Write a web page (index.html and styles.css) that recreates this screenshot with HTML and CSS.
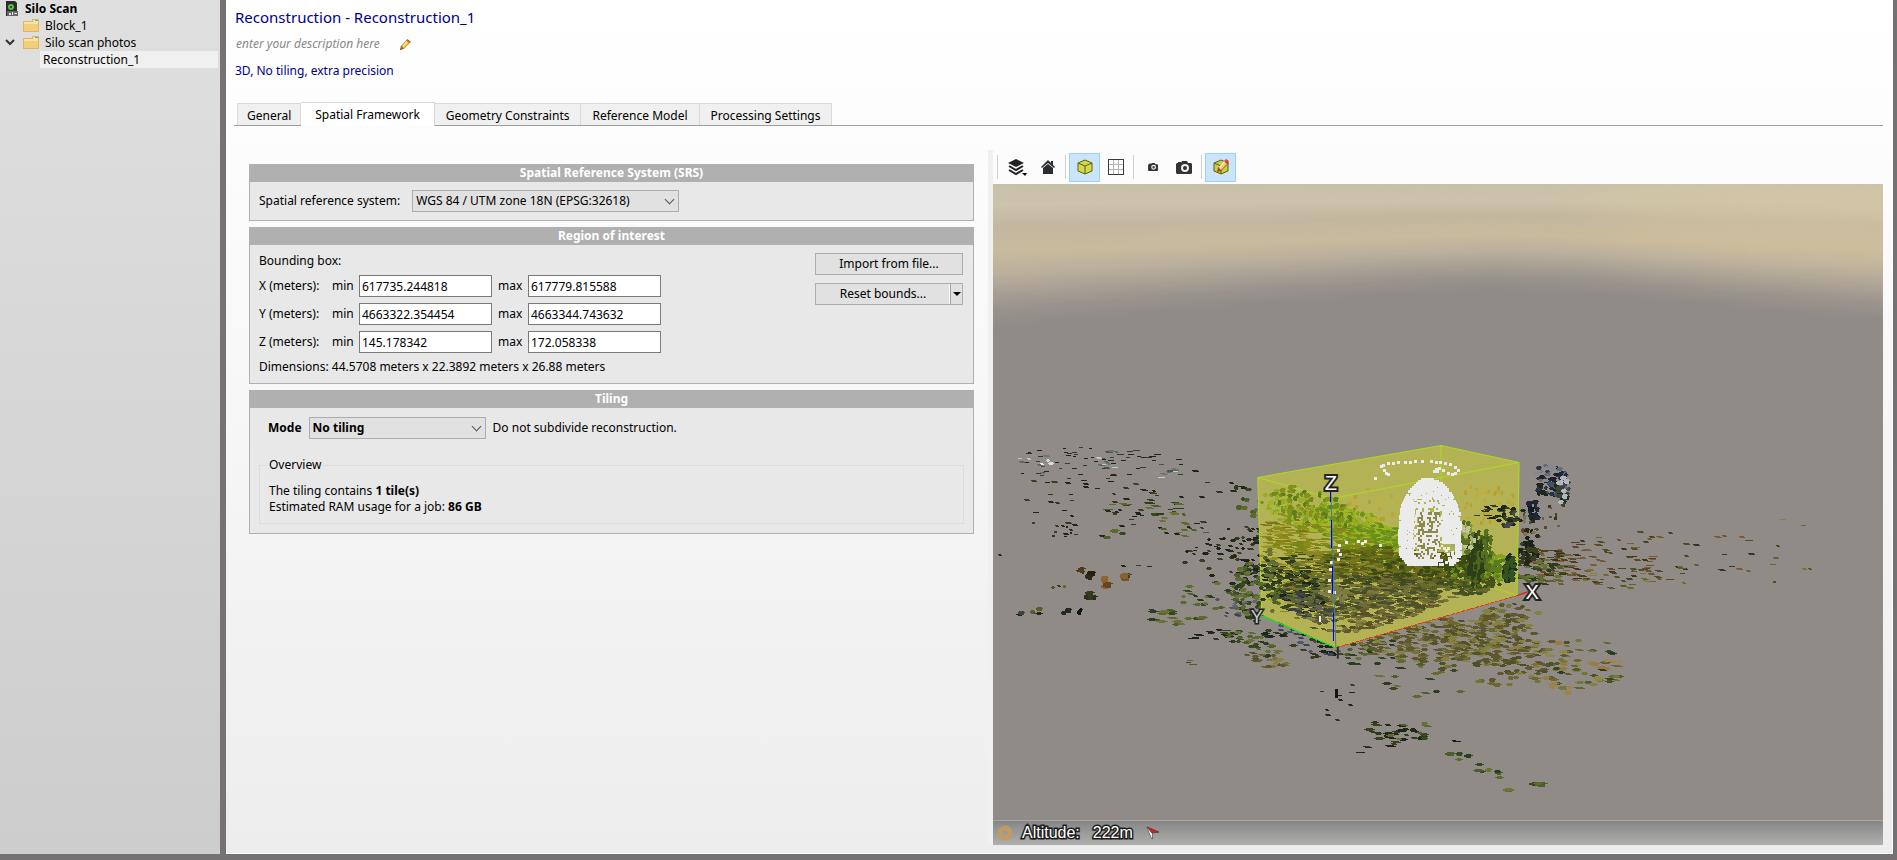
FILE: index.html
```html
<!DOCTYPE html>
<html lang="en">
<head>
<meta charset="UTF-8">
<title>Silo Scan - Reconstruction_1</title>
<link rel="stylesheet" href="styles.css">
<script src="scene.js" defer></script>
</head>
<body>

<nav class="sidebar">
	<ul class="tree">
		<li class="project">
			<svg width="14" height="16" viewBox="0 0 14 16"><path fill="#2b2b2b" d="M1 0h9l2 2v13H1z"/><path fill="#666" d="M2 10h11v5H2z"/><path fill="#ddd" d="M4 12h2v2H4zM7 11h1v3H7zM9 12h3v1H9z"/><circle cx="6" cy="6" r="2" fill="none" stroke="#5bc043" stroke-width="2"/></svg>
			<a href="#project">Silo Scan</a>
		</li>
		<li class="block">
			<svg class="folder" width="16" height="13" viewBox="0 0 16 13"><path fill="#e0b45c" d="M0 2h9V0h7v13H0z"/><path fill="#fbe3a0" d="M1 3h9V1h5v11H1z"/><path fill="#f2ce7c" d="M1 5h14v7H1z"/><path fill="#45b4e0" d="M12 1h3v1h-3z"/></svg>
			<a href="#block">Block_1</a>
		</li>
		<li class="block open">
			<svg class="chevron" width="10" height="7" viewBox="0 0 10 7"><path fill="none" stroke="#333" stroke-width="2" d="M1 1l4 4 4-4"/></svg>
			<svg class="folder" width="16" height="13" viewBox="0 0 16 13"><path fill="#e0b45c" d="M0 2h9V0h7v13H0z"/><path fill="#fbe3a0" d="M1 3h9V1h5v11H1z"/><path fill="#f2ce7c" d="M1 5h14v7H1z"/><path fill="#45b4e0" d="M12 1h3v1h-3z"/></svg>
			<a href="#photos">Silo scan photos</a>
		</li>
		<li class="recon"><a href="#recon">Reconstruction_1</a></li>
	</ul>
</nav>

<main class="main">
	<header class="heading">
		<h1>Reconstruction - Reconstruction_1</h1>
		<p class="description">
			enter your description here
			<svg width="11" height="11" viewBox="0 0 12 12"><path fill="#94701f" d="M0 12l1-4 7-8 4 3-8 8z"/><path fill="#f8cf45" d="M2 8l5-6 3 2-6 6z"/><path fill="#fbe9a0" d="M3 7l4-5 1 1-4 5z"/><path fill="#e0604a" d="M8 1l3 2-1 1-3-2z"/><path fill="#333" d="M0 12l1-2 1 1z"/></svg>
		</p>
		<p class="summary">3D, No tiling, extra precision</p>
	</header>

	<div class="tabs" role="tablist">
		<button type="button" role="tab">General</button>
		<button type="button" role="tab" class="active" aria-selected="true">Spatial Framework</button>
		<button type="button" role="tab">Geometry Constraints</button>
		<button type="button" role="tab">Reference Model</button>
		<button type="button" role="tab">Processing Settings</button>
	</div>

	<div class="content">
		<form class="settings">
			<section class="panel">
				<h2>Spatial Reference System (SRS)</h2>
				<div class="panel-body srs">
					<label for="srs">Spatial reference system:</label>
					<span class="dropdown wide">
						<select id="srs"><option>WGS 84 / UTM zone 18N (EPSG:32618)</option></select>
					</span>
				</div>
			</section>

			<section class="panel">
				<h2>Region of interest</h2>
				<div class="panel-body region">
					<div class="bounds">
						<p>Bounding box:</p>
						<div class="bound">
							<span class="axis">X (meters):</span>
							<label for="xmin">min</label><input type="text" id="xmin" value="617735.244818">
							<label for="xmax">max</label><input type="text" id="xmax" value="617779.815588">
						</div>
						<div class="bound">
							<span class="axis">Y (meters):</span>
							<label for="ymin">min</label><input type="text" id="ymin" value="4663322.354454">
							<label for="ymax">max</label><input type="text" id="ymax" value="4663344.743632">
						</div>
						<div class="bound">
							<span class="axis">Z (meters):</span>
							<label for="zmin">min</label><input type="text" id="zmin" value="145.178342">
							<label for="zmax">max</label><input type="text" id="zmax" value="172.058338">
						</div>
						<p>Dimensions: 44.5708 meters x 22.3892 meters x 26.88 meters</p>
					</div>
					<div class="actions">
						<button type="button" class="btn">Import from file...</button>
						<div class="split">
							<button type="button" class="btn">Reset bounds...</button>
							<button type="button" class="btn more" aria-label="More reset options"><svg width="8" height="4" viewBox="0 0 8 4"><path d="M0 0h8L4 4z"/></svg></button>
						</div>
					</div>
				</div>
			</section>

			<section class="panel">
				<h2>Tiling</h2>
				<div class="panel-body tiling">
					<div class="mode">
						<label for="mode">Mode</label>
						<span class="dropdown">
							<select id="mode"><option>No tiling</option></select>
						</span>
						<span>Do not subdivide reconstruction.</span>
					</div>
					<fieldset>
						<legend>Overview</legend>
						<p>The tiling contains <b>1 tile(s)</b></p>
						<p>Estimated RAM usage for a job: <b>86 GB</b></p>
					</fieldset>
				</div>
			</section>
		</form>

		<section class="viewer">
			<div class="toolbar">
				<span class="sep"></span>
				<button type="button" class="tool" aria-label="Layers">
					<svg width="20" height="18" viewBox="0 0 20 18"><path fill="#222" d="M9 1l8 4-8 4-8-4z"/><path fill="none" stroke="#222" stroke-width="2" d="M2 8l7 4 7-4M2 12l7 4 7-4"/><path d="M15 15h5l-2 3z"/></svg>
				</button>
				<button type="button" class="tool" aria-label="Home">
					<svg width="14" height="14" viewBox="0 0 14 14"><path fill="#2a2d30" d="M2 8l5-4 5 4v6H2zM0 7l7-7 3 3V1h2v4l2 2-1 1-6-5-6 5z"/></svg>
				</button>
				<span class="sep"></span>
				<button type="button" class="tool on" aria-label="Bounding box">
					<svg width="16" height="16" viewBox="0 0 16 16"><path fill="#d5d84a" stroke="#5c5f14" d="M8 1l7 3v8l-7 3-7-3V4z"/><path fill="none" stroke="#5c5f14" d="M1 4l7 3 7-3M8 7v8"/></svg>
				</button>
				<button type="button" class="tool" aria-label="Grid">
					<svg width="16" height="16" viewBox="0 0 16 16" shape-rendering="crispEdges"><path fill="#fff" stroke="#3a3a3a" d="M.5.5h15v15H.5z"/><path fill="none" stroke="#b5b5b5" d="M5.500 1v14M10.500 1v14M1 5.500h14M1 10.500h14"/></svg>
				</button>
				<span class="sep"></span>
				<button type="button" class="tool" aria-label="Smaller cameras">
					<svg width="10" height="8" viewBox="0 0 16 13"><path fill="#333" d="M1 2h1V1h3v1l1-2h5l1 2h3l1 1v9l-1 1H1l-1-1V3z"/><circle cx="9" cy="7" r="3" fill="#444" stroke="#eee" stroke-width="2"/></svg>
				</button>
				<button type="button" class="tool" aria-label="Larger cameras">
					<svg width="16" height="13" viewBox="0 0 16 13"><path fill="#333" d="M1 2h1V1h3v1l1-2h5l1 2h3l1 1v9l-1 1H1l-1-1V3z"/><circle cx="9" cy="7" r="3" fill="#333" stroke="#eee" stroke-width="2"/></svg>
				</button>
				<span class="sep"></span>
				<button type="button" class="tool on" aria-label="Edit region">
					<svg width="16" height="16" viewBox="0 0 16 16"><path fill="#c9cc45" stroke="#5c5f14" d="M8 1l7 3v8l-7 3-7-3V4z"/><path fill="none" stroke="#5c5f14" d="M1 4l7 3 7-3M8 7v8"/><path fill="#a3492a" d="M4 13l1-4 7-8 4 3-8 8z"/><path fill="#fbd04c" d="M6 9l6-6 2 2-6 6z"/><path fill="#fff" d="M6 8l5-6 1 1-5 6z"/><path fill="#e8402e" d="M12 1l1-1 3 2-1 2z"/></svg>
				</button>
			</div>
			<div class="view">
				<svg class="scene" viewBox="0 0 890 660" preserveAspectRatio="xMidYMin slice">
					<g id="sky"></g>
					<g id="outside" shape-rendering="crispEdges"></g>
					<path fill="#b3b355" d="M265 293L448 261L526 278L524 411L343 463L269 430z"/>
					<g fill="none" stroke="#aadc1e">
						<path d="M265 293L448 261L526 278L339 314zM265 293L269 430M526 278L524 411M448 261v36M481 397l43 14M386 401l22-4"/>
					</g>
					<g id="inside" shape-rendering="crispEdges"></g>
					<g id="silo" shape-rendering="crispEdges" fill="#ebebeb"></g>
					<g fill="none">
						<path stroke="#4a8088" d="M338 306L343 463"/>
						<path stroke="#0000f0" stroke-width="1" shape-rendering="crispEdges" d="M338 306v12M339 335v28M340 381v28M341 428v28"/>
						<path stroke="#00f000" stroke-width="1" shape-rendering="crispEdges" d="M264 429L343 463"/>
						<path stroke="#f03a00" stroke-width="1" stroke-dasharray="4 1" shape-rendering="crispEdges" d="M343 463L524 411"/>
						<path stroke="#f00000" stroke-width="1" d="M524 411L535 407"/>
						<path stroke="#33302a" stroke-width="2" d="M345 462v12"/>
					</g>
					<g class="axis-name">
						<text x="338" y="306">Z</text>
						<text x="539" y="414">X</text>
						<text class="faint" x="264" y="438">Y</text>
					</g>
				</svg>
				<div class="status">
					<svg width="16" height="16" viewBox="0 0 16 16"><circle cx="8" cy="8" r="5" fill="none" stroke="#c29a63" stroke-width="5"/></svg>
					<span class="altitude">Altitude:</span>
					<span>222m</span>
					<svg class="compass" width="14" height="14" viewBox="0 0 14 14"><path fill="#eee" stroke="#444" d="M1 1l5 5v7z"/><path fill="#c8201c" stroke="#444" d="M1 1l12 5-7 1z"/></svg>
				</div>
			</div>
		</section>
	</div>
</main>

</body>
</html>
```
FILE: styles.css
```css
* {
	box-sizing: border-box;
}
html, body {
	margin: 0;
	padding: 0;
}
body {
	display: flex;
	min-height: 100vh;
	padding: 0 4px 6px 0;
	background: #767173;
	color: #000;
	font-family: "Noto Sans", Tahoma, "DejaVu Sans", sans-serif;
	font-size: 12px;
	line-height: 16px;
}
h1, h2, p, ul, fieldset {
	margin: 0;
	padding: 0;
}
button, input, select {
	font: inherit;
	color: inherit;
}

/* project tree */
.sidebar {
	flex: 0 0 220px;
	margin-right: 6px;
	background: linear-gradient(#dfdfdf, #cdcdcd);
}
.tree {
	list-style: none;
	padding: 0 2px 0 0;
}
.tree li {
	display: flex;
	align-items: center;
	gap: 6px;
	height: 17px;
}
.tree a {
	color: inherit;
	text-decoration: none;
}
.tree .project {
	padding-left: 5px;
	font-weight: bold;
}
.tree .block {
	padding-left: 23px;
}
.tree .open {
	padding-left: 5px;
	gap: 8px;
}
.tree .open a {
	margin-left: -2px;
}
.tree .recon {
	margin-left: 40px;
	padding-left: 3px;
	background: #f0f0f0;
}

/* right hand page */
.main {
	flex: 1;
	display: flex;
	flex-direction: column;
	min-width: 0;
	padding: 7px 9px 8px 8px;
	border: solid #fff;
	border-width: 0 1px 1px 0;
	background: linear-gradient(#fff, #fcfcfc 20%, #ededed);
}
.heading {
	height: 95px;
	padding-left: 1px;
	color: #00008b;
}
h1 {
	font-size: 15px;
	font-weight: normal;
	line-height: 20px;
}
.description {
	display: flex;
	align-items: center;
	gap: 20px;
	margin: 9px 0 11px 1px;
	color: #888;
	font-style: italic;
}
.tabs {
	display: flex;
	align-items: flex-end;
	height: 24px;
	padding-left: 3px;
	border-bottom: 1px solid #a0a0a0;
}
.tabs button {
	height: 22px;
	padding: 2px 11px 0;
	border: 1px solid #d9d9d9;
	border-width: 1px 1px 0 0;
	background: #f0f0f0;
}
.tabs button:first-child {
	padding: 2px 9px 0;
	border-left-width: 1px;
}
.tabs button.active {
	height: 24px;
	margin-bottom: -1px;
	padding: 0 14px;
	background: #fff;
}
.content {
	flex: 1;
	display: grid;
	grid-template-columns: 754fr 895fr;
	padding-top: 24px;
}

/* settings form */
.settings {
	display: flex;
	flex-direction: column;
	gap: 6px;
	padding: 14px 14px 0 15px;
}
.panel {
	border: 1px solid #b0b0b0;
	background: #e8e8e8;
}
h2 {
	height: 17px;
	background: #b0b0b0;
	color: #fff;
	font-size: 12px;
	line-height: 16px;
	text-align: center;
}
.panel-body {
	padding: 8px 10px 8px 9px;
}
.srs, .mode {
	display: flex;
	align-items: center;
	gap: 7px;
}
.srs {
	gap: 12px;
}
.dropdown {
	position: relative;
	width: 177px;
}
.dropdown.wide {
	width: 267px;
}
.dropdown::after {
	content: "";
	position: absolute;
	right: 6px;
	top: 6px;
	width: 6px;
	height: 6px;
	border: solid #555;
	border-width: 0 1px 1px 0;
	transform: rotate(45deg);
	pointer-events: none;
}
select {
	display: block;
	appearance: none;
	width: 100%;
	height: 22px;
	padding: 0 3px;
	border: 1px solid #adadad;
	border-radius: 0;
	background: #e1e1e1;
}
.region {
	display: flex;
	justify-content: space-between;
}
.bounds {
	display: flex;
	flex-direction: column;
	gap: 6px;
}
.bound {
	display: flex;
	align-items: center;
	gap: 6px;
}
.axis {
	width: 67px;
}
.bound label {
	width: 21px;
}
.bound label:nth-of-type(2) {
	width: 24px;
}
.bound input {
	width: 133px;
	height: 22px;
	padding: 0 2px;
	border: 1px solid #7a7a7a;
	background: #fff;
}
.actions {
	display: flex;
	flex-direction: column;
	gap: 8px;
	width: 148px;
}
.btn {
	height: 22px;
	padding: 0;
	border: 1px solid #adadad;
	background: #e1e1e1;
}
.split {
	display: flex;
}
.split .btn {
	flex: 1;
	border-right: 0;
	box-shadow: inset -1px 0 #fff;
}
.split .more {
	flex: 0 0 13px;
	border-right: 1px solid #adadad;
	border-left: 1px solid #a0a0a0;
	box-shadow: none;
}
.more svg {
	display: block;
	margin: 0 auto;
}
.panel-body.tiling {
	padding: 9px;
}
.mode label, .mode select {
	font-weight: bold;
}
.mode label {
	padding-left: 9px;
}
fieldset {
	margin-top: 18px;
	padding: 10px 9px 8px;
	border: 1px solid #dcdcdc;
}
legend {
	padding: 0 2px;
	margin-left: -2px;
}

/* 3D view */
.viewer {
	display: flex;
	flex-direction: column;
	border-left: 5px solid #f0f0f0;
}
.toolbar {
	display: flex;
	align-items: center;
	height: 34px;
	padding: 0 2px;
	background: #fcfcfc;
}
.sep {
	width: 1px;
	height: 24px;
	margin: 0 3px 0 2px;
	background: #d0d0d0;
}
.tool {
	display: flex;
	align-items: center;
	justify-content: center;
	width: 31px;
	height: 29px;
	padding: 0;
	border: 1px solid transparent;
	background: none;
}
.tool.on {
	border-color: #99d1ff;
	background: #cce4f9;
}
.view {
	flex: 1;
	position: relative;
	min-height: 320px;
	overflow: hidden;
	background: #8f8a86;
}
.scene {
	position: absolute;
	width: 100%;
	height: 100%;
}
.axis-name {
	fill: #fff;
	stroke: #222;
	stroke-width: 4px;
	paint-order: stroke;
	font: 20px "Liberation Sans", Arial, sans-serif;
	text-anchor: middle;
}
.axis-name .faint {
	fill: #ccc;
	font-size: 18px;
	stroke-width: 3px;
}
.status {
	position: absolute;
	left: 0;
	right: 0;
	bottom: 0;
	display: flex;
	align-items: center;
	gap: 13px;
	height: 25px;
	padding: 0 4px;
	border-top: 1px solid #a8a4a1;
	background: linear-gradient(#868686, #afafae);
	color: #fff;
	font: 16px "Liberation Sans", Arial, sans-serif;
	-webkit-text-stroke: 3px #1c1c1c;
	paint-order: stroke;
}
.altitude {
	margin-left: -4px;
}
```
FILE: scene.js
```js
var SVG = 'http://www.w3.org/2000/svg';
var seed = 7;

function rnd() {
	seed = (seed * 16807) % 2147483647;
	return seed / 2147483647;
}

function add_path(parent, d, fill) {
	var p = document.createElementNS(SVG, 'path');
	p.setAttribute('d', d);
	if (fill) p.setAttribute('fill', fill);
	document.getElementById(parent).appendChild(p);
}

// sky: bands that bend towards the middle of the horizon
var sky_stops = [
	[0, 200, 192, 170], [20, 204, 195, 170], [42, 196, 183, 160], [68, 200, 186, 156],
	[88, 188, 176, 158], [108, 168, 160, 147], [124, 154, 147, 141], [146, 143, 138, 134]
];

function sky_colour(y) {
	var i = 0;
	while (i < sky_stops.length - 2 && sky_stops[i + 1][0] < y) i++;
	var a = sky_stops[i], b = sky_stops[i + 1];
	var t = Math.min(1, (y - a[0]) / (b[0] - a[0]));
	var c = [1, 2, 3].map(function (k) { return Math.round(a[k] + (b[k] - a[k]) * t); });
	return 'rgb(' + c.join(',') + ')';
}

function draw_sky() {
	for (var y = 0; y < 146; y += 2) {
		var mid = y * 0.74;
		add_path('sky', 'M0 ' + y + 'Q350 ' + (mid + y * 0.04) + ' 500 ' + mid +
			'Q620 ' + (mid + y * 0.02) + ' 890 ' + (y * 0.96) + 'V660H0z', sky_colour(y));
	}
	var glow = document.createElementNS(SVG, 'ellipse');
	glow.setAttribute('cx', 860);
	glow.setAttribute('cy', 20);
	glow.setAttribute('rx', 260);
	glow.setAttribute('ry', 55);
	glow.setAttribute('fill', '#e0cc9c');
	glow.setAttribute('style', 'opacity:.3;filter:blur(30px)');
	document.getElementById('sky').appendChild(glow);
}

var dark = ['#1e2415', '#25291a', '#2f3a1e', '#1c2420', '#39401f'];
var green = ['#36481f', '#4b5f2b', '#5c6b2c', '#2c3b22', '#6a7137'];
var grey = ['#5c6a68', '#8c9492', '#4b5050', '#c0c8c6', '#6c7478'];
var brown = ['#59482a', '#7d5c35', '#3c3318', '#6b5b35', '#4b431f'];
var olive = ['#6a6730', '#777238', '#5c5728', '#4e5026', '#868043', '#615533'];
var lime = ['#84a31b', '#8eae1b', '#9aac2a', '#73921c', '#a3b52a'];
var mustard = ['#989420', '#8a861c', '#a7a032', '#7b7718', '#94901c'];
var gold = ['#c2b034', '#b5a22e', '#bda73a'];
var night = ['#14202a', '#2a3142', '#1d2318', '#42506a', '#20281e'];

// x, y, half width, half height, slope, count, point width, point height, colours
var outside = [
	[80, 284, 68, 22, 0, 46, 5, 1, dark], [45, 280, 22, 10, 0, 10, 6, 2, grey],
	[54, 278, 7, 3, 0, 3, 6, 3, ['#d5dedb', '#eee']],
	[120, 277, 17, 12, 0, 14, 6, 2, grey], [172, 290, 13, 11, 0, 10, 7, 2, grey],
	[150, 277, 50, 12, 0, 12, 6, 1, dark],
	[110, 320, 85, 32, 0.15, 38, 6, 2, dark], [160, 325, 48, 10, 0, 14, 9, 2, green],
	[200, 300, 55, 25, 0, 14, 7, 2, dark], [100, 360, 95, 40, 0, 10, 5, 2, dark],
	[190, 338, 32, 12, 0.2, 18, 7, 2, green], [215, 355, 35, 25, 0, 18, 5, 2, dark],
	[120, 350, 12, 8, 0, 3, 10, 4, green], [70, 346, 12, 8, 0, 8, 4, 2, dark],
	[93, 388, 9, 7, 0, 6, 7, 6, ['#23230f', '#2e2819', '#33331a', '#4e3b20']],
	[98, 409, 3, 5, 0, 4, 9, 7, ['#2a2f18', '#363a20']],
	[113, 396, 2, 7, 0, 3, 8, 7, ['#8c6535', '#60471f']],
	[133, 388, 8, 2, 0, 4, 9, 7, ['#735426', '#4f3b1c', '#856236']],
	[70, 400, 10, 3, 0, 3, 4, 3, brown],
	[37, 425, 14, 7, 0, 6, 7, 4, ['#22271a', '#3e443b', '#5f5a29']],
	[83, 425, 14, 3, 0, 4, 6, 5, ['#11180f', '#25291b']],
	[180, 430, 32, 8, 0.1, 20, 10, 3, green], [225, 410, 40, 16, 0, 30, 8, 3, green],
	[230, 375, 40, 25, 0, 24, 6, 3, dark], [255, 315, 20, 14, 0.4, 14, 7, 5, green],
	[260, 370, 20, 32, 0, 65, 6, 3, dark], [260, 405, 22, 30, 0, 80, 7, 4, green],
	[250, 420, 30, 14, 0, 22, 5, 3, ['#555963', '#46423b', '#66636f']],
	[225, 450, 26, 8, -0.2, 14, 9, 2, dark], [262, 457, 27, 12, 0.3, 34, 8, 3, green],
	[273, 473, 22, 9, 0.1, 20, 8, 3, olive], [198, 477, 4, 2, 0, 3, 7, 2, green],
	[305, 453, 38, 14, 0.4, 34, 8, 3, dark], [320, 455, 34, 12, 0.4, 16, 7, 3, ['#50546a', '#3c4458']],
	[380, 463, 35, 18, 0, 46, 9, 3, green], [440, 453, 75, 22, -0.05, 200, 9, 3, olive],
	[500, 455, 50, 25, 0, 130, 9, 3, olive], [490, 470, 80, 28, 0.1, 75, 9, 4, olive],
	[560, 477, 70, 26, 0.15, 55, 10, 3, olive], [585, 478, 45, 26, 0, 18, 9, 4, ['#8e8a43', '#987c45', '#707a36']],
	[520, 430, 30, 15, 0, 42, 9, 4, olive], [600, 480, 45, 25, 0, 14, 10, 3, green],
	[622, 473, 9, 3, 0, 3, 9, 4, ['#a18650']],
	[565, 500, 14, 10, 0.5, 5, 9, 4, ['#9c8349']], [430, 493, 45, 24, 0, 14, 10, 3, green],
	[342, 508, 20, 26, 0, 9, 5, 2, dark], [342, 506, 2, 4, 0, 2, 3, 8, ['#15170f']],
	[402, 548, 32, 13, 0.1, 26, 10, 3, dark], [415, 546, 28, 12, 0, 10, 8, 3, green],
	[373, 564, 12, 3, -0.5, 3, 9, 1, dark], [468, 566, 12, 7, -0.3, 4, 10, 5, green],
	[495, 584, 16, 5, 0.3, 7, 10, 4, green], [513, 604, 3, 1, 0, 2, 10, 4, olive],
	[545, 597, 3, 1, 0, 3, 11, 5, green], [461, 556, 3, 1, 0, 2, 8, 2, ['#171d0e']],
	[550, 380, 42, 18, 0.1, 90, 9, 2, brown], [610, 378, 70, 22, 0.1, 52, 8, 2, brown],
	[545, 385, 28, 13, 0.1, 40, 9, 3, green], [700, 368, 110, 24, 0.05, 42, 7, 2, brown],
	[650, 390, 60, 16, 0, 22, 7, 2, olive], [790, 370, 30, 40, 0, 5, 5, 2, olive],
	[555, 289, 18, 9, 0, 34, 7, 4, ['#33363b', '#646878', '#1f2027', '#85888f']],
	[557, 303, 15, 7, 0, 34, 6, 5, night],
	[570, 302, 5, 18, 0, 42, 6, 5, ['#3d465d', '#616b83', '#1e2833', '#39462e', '#b3b6bd']],
	[541, 320, 6, 16, 0, 12, 6, 6, ['#111b2e', '#202838']],
	[537, 340, 9, 24, 0, 28, 5, 5, ['#172018', '#5e472f', '#242a1d', '#7c99a0', '#897046']],
	[533, 365, 11, 12, 0, 36, 6, 5, dark], [560, 330, 16, 14, 0, 9, 3, 3, brown]
];

var inside = [
	[305, 375, 36, 58, 0.1, 190, 10, 2, mustard], [305, 326, 37, 16, 0.3, 50, 5, 4, lime],
	[330, 330, 55, 20, 0.3, 130, 6, 5, lime], [362, 343, 43, 20, 0.3, 320, 7, 4, lime],
	[385, 355, 32, 18, 0.1, 170, 7, 3, ['#92b41a', '#7d9b18', '#689018']],
	[320, 320, 45, 18, 0.2, 60, 5, 5, ['#738a20', '#5e7d1b', '#85901e']],
	[330, 360, 57, 22, 0.1, 210, 9, 2, ['#91891c', '#888a1a', '#77851b']],
	[385, 378, 58, 18, 0, 430, 9, 3, ['#686712', '#73701a', '#555c16', '#5f6c18']],
	[440, 385, 60, 18, -0.05, 420, 8, 4, ['#4c5a16', '#626417', '#6e6a20', '#3b4b16']],
	[340, 388, 60, 22, 0.1, 260, 9, 2, ['#5c5d19', '#777422', '#3b451d', '#89852c']],
	[365, 405, 80, 18, 0, 260, 10, 3, ['#6d6b2c', '#54572a', '#777334', '#454b28']],
	[390, 415, 82, 17, -0.15, 190, 10, 3, ['#665e2b', '#7b7838', '#49502b', '#6a6d36']],
	[300, 405, 30, 22, 0.2, 80, 8, 3, dark], [300, 398, 32, 27, 0.2, 60, 8, 3, green],
	[315, 421, 24, 12, 0.3, 60, 8, 3, ['#4c5048', '#646256', '#3b4145', '#5e6136']],
	[350, 435, 38, 12, 0, 42, 8, 3, olive], [400, 428, 48, 8, -0.3, 60, 9, 3, olive],
	[342, 407, 14, 7, 0, 40, 7, 4, ['#85834c', '#7a7a40']],
	[277, 395, 10, 32, 0, 45, 6, 4, green], [290, 345, 22, 10, 0.2, 25, 10, 2, mustard],
	[495, 318, 30, 22, 0, 50, 3, 4, gold], [380, 320, 32, 18, 0.1, 22, 4, 4, gold],
	[483, 390, 30, 13, 0, 130, 7, 4, ['#5a761a', '#3b4f18', '#6d8f1a', '#49521c']],
	[503, 380, 17, 12, 0, 100, 7, 4, ['#70941b', '#84a21c', '#5c7b1c']],
	[483, 371, 9, 28, 0, 130, 5, 7, ['#38501a', '#4d661b', '#2d3e18']],
	[494, 362, 5, 20, 0, 36, 4, 6, ['#425c1c', '#566f1e']],
	[471, 352, 11, 18, 0, 60, 5, 5, ['#a0ab70', '#7f9546', '#c0c698', '#5a6f22']],
	[514, 330, 9, 10, 0, 26, 6, 4, ['#1e241f', '#333b2c', '#44484c']],
	[498, 327, 16, 6, 0, 16, 7, 2, dark], [521, 334, 7, 3, 0, 8, 6, 3, dark],
	[517, 382, 6, 15, -0.5, 55, 6, 5, ['#1f3518', '#1d2e1c', '#34511f']],
	[455, 402, 40, 10, 0, 60, 9, 3, ['#5c5c26', '#6a6a2f', '#455025']]
];

// every point is a flat flake, a wide row across a narrower body
function draw_points(parent, clusters) {
	clusters.forEach(function (c) {
		var paths = c[8].map(function () { return ''; });
		for (var i = 0; i < c[5]; i++) {
			var a = rnd() * Math.PI * 2;
			var r = Math.sqrt(rnd());
			var dx = Math.cos(a) * r * c[2];
			var x = Math.round(c[0] + dx);
			var y = Math.round(c[1] + Math.sin(a) * r * c[3] + dx * c[4]);
			var w = Math.max(2, Math.round(c[6] * (0.6 + rnd() * 0.6)));
			var h = Math.max(1, Math.round(c[7] * (0.6 + rnd() * 0.5)));
			var s = Math.floor(w / 4);
			var row = h > 2 ? 1 : 0;
			x -= Math.floor(w / 2);
			paths[i % paths.length] += 'M' + x + ' ' + (y + row) + 'h' + (w - s) + 'v' + Math.max(1, h - 2) + 'h' + (s - w) +
				'zM' + (x + s) + ' ' + y + 'h' + (w - 2 * s) + 'v' + h + 'h' + (2 * s - w) +
				'zM' + (x + w - s - 1) + ' ' + (y + (h > 1 ? 1 : 0)) + 'h' + (s + 1) + 'v1h' + (-s - 1) + 'z';
		}
		paths.forEach(function (d, n) { add_path(parent, d, c[8][n]); });
	});
}

// the silo shell, with a grid of gaps in the middle of its front
function draw_silo() {
	var d = '';
	add_path('silo', 'M425 328h22v36l-8 10h-14z', '#8b8a4a');
	for (var y = 294; y < 379; y += 2) {
		var t = (y - 294) / 85;
		var half = 7 + 24 * (1 - Math.pow(1 - t, 5));
		var mid = 435 + t * 2;
		if (y > 368) half -= (y - 368) * 0.8;
		for (var x = mid - half; x < mid + half; x += 2) {
			var u = (x - mid) / half;
			var front = y > 312 && y < 374 && u > -0.55 && u < 0.4;
			if (front && rnd() < (y > 326 ? 0.42 : 0.25)) continue;
			if (y > 356 && u > 0.3 && u < 0.75 && rnd() < 0.75) continue;
			if (!front && rnd() < 0.06) continue;
			d += 'M' + Math.round(x) + ' ' + y + 'h' + (front ? 2 : 3) + 'v' + (front ? 2 : 3) + 'h-' + (front ? 2 : 3) + 'z';
		}
	}
	var dots = [
		[390, 281], [395, 279], [400, 279], [405, 278], [412, 278], [417, 278], [422, 277],
		[429, 277], [438, 277], [443, 278], [447, 278], [452, 279], [457, 280], [462, 283],
		[465, 286], [462, 289], [459, 290], [455, 289], [450, 286], [446, 284], [443, 285],
		[441, 287], [444, 287], [388, 282], [391, 286], [393, 289], [395, 290], [382, 294],
		[346, 360], [345, 365], [347, 369], [345, 374], [338, 377], [337, 384], [336, 395],
		[336, 406], [341, 407], [353, 357], [365, 356], [369, 358], [372, 356], [387, 360]
	];
	dots.forEach(function (p) { d += 'M' + (p[0] - 1) + ' ' + (p[1] - 1) + 'h3v3h-3z'; });
	d += 'M326 431h2v6h-2z';
	add_path('silo', d);
}

draw_sky();
draw_points('outside', outside);
draw_points('inside', inside);
draw_silo();
```
